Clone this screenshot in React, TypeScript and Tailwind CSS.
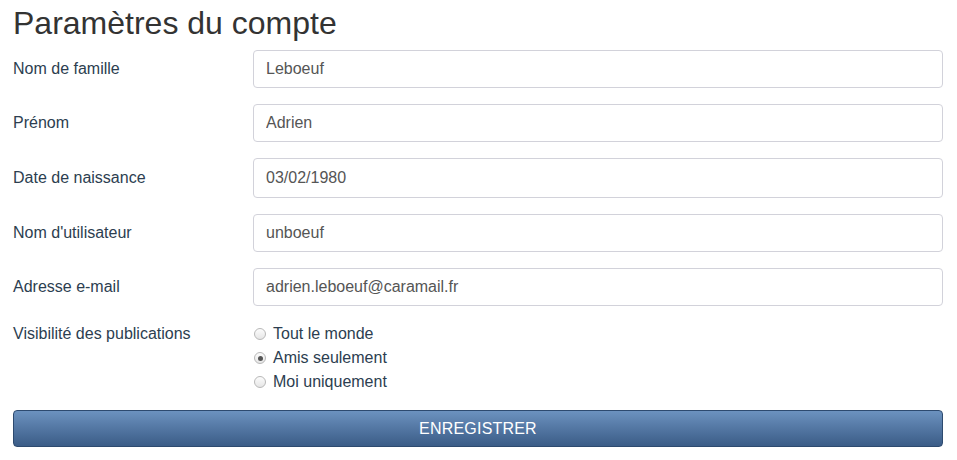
import React, { useState } from 'react';

const fields = [
  { label: "Nom de famille", value: "Leboeuf", h: "h-[38px]" },
  { label: "Prénom", value: "Adrien", h: "h-[38px]" },
  { label: "Date de naissance", value: "03/02/1980", h: "h-[40px]" },
  { label: "Nom d'utilisateur", value: "unboeuf", h: "h-[38px]" },
  { label: "Adresse e-mail", value: "adrien.leboeuf@caramail.fr", h: "h-[38px]" },
];

const options = ["Tout le monde", "Amis seulement", "Moi uniquement"];

function Radio({ checked }: { checked: boolean }) {
  return (
    <span className="w-[12px] h-[12px] rounded-full border border-[#b8b8b8] bg-gradient-to-b from-[#fcfcfc] to-[#e6e6e6] flex items-center justify-center shrink-0">
      {checked && <span className="w-[5px] h-[5px] rounded-full bg-[#555]" />}
    </span>
  );
}

export default function App() {
  const [visibility, setVisibility] = useState(1);

  return (
    <div className="pl-[13px] pr-[14px] pt-[6px] font-['Liberation_Sans',Arial,sans-serif] bg-white">
      <h1 className="text-[32px] leading-[35px] text-[#333] mb-[9px]">Paramètres du compte</h1>

      {fields.map((f) => (
        <div key={f.label} className="flex items-center mb-4">
          <label className="w-[240px] shrink-0 text-[16px] text-[#2c3e50]">{f.label}</label>
          <input
            defaultValue={f.value}
            className={`flex-1 ${f.h} px-[12px] text-[16px] text-[#555] border border-[#d2d2da] rounded-[4px] outline-none`}
          />
        </div>
      ))}

      <div className="flex items-start">
        <div className="w-[240px] shrink-0 text-[16px] leading-[24px] text-[#2c3e50]">Visibilité des publications</div>
        <div className="flex flex-col pl-[1px]">
          {options.map((o, i) => (
            <label key={o} className="flex items-center gap-[7px] h-[24px] text-[16px] text-[#2c3e50] cursor-pointer" onClick={() => setVisibility(i)}>
              <Radio checked={visibility === i} />
              {o}
            </label>
          ))}
        </div>
      </div>

      <button className="mt-[16px] w-full h-[37px] rounded-[4px] border border-[#2d4a6f] bg-gradient-to-b from-[#6c92bf] to-[#3b5c87] text-white text-[16px] tracking-[0.2px]">
        ENREGISTRER
      </button>
    </div>
  );
}
